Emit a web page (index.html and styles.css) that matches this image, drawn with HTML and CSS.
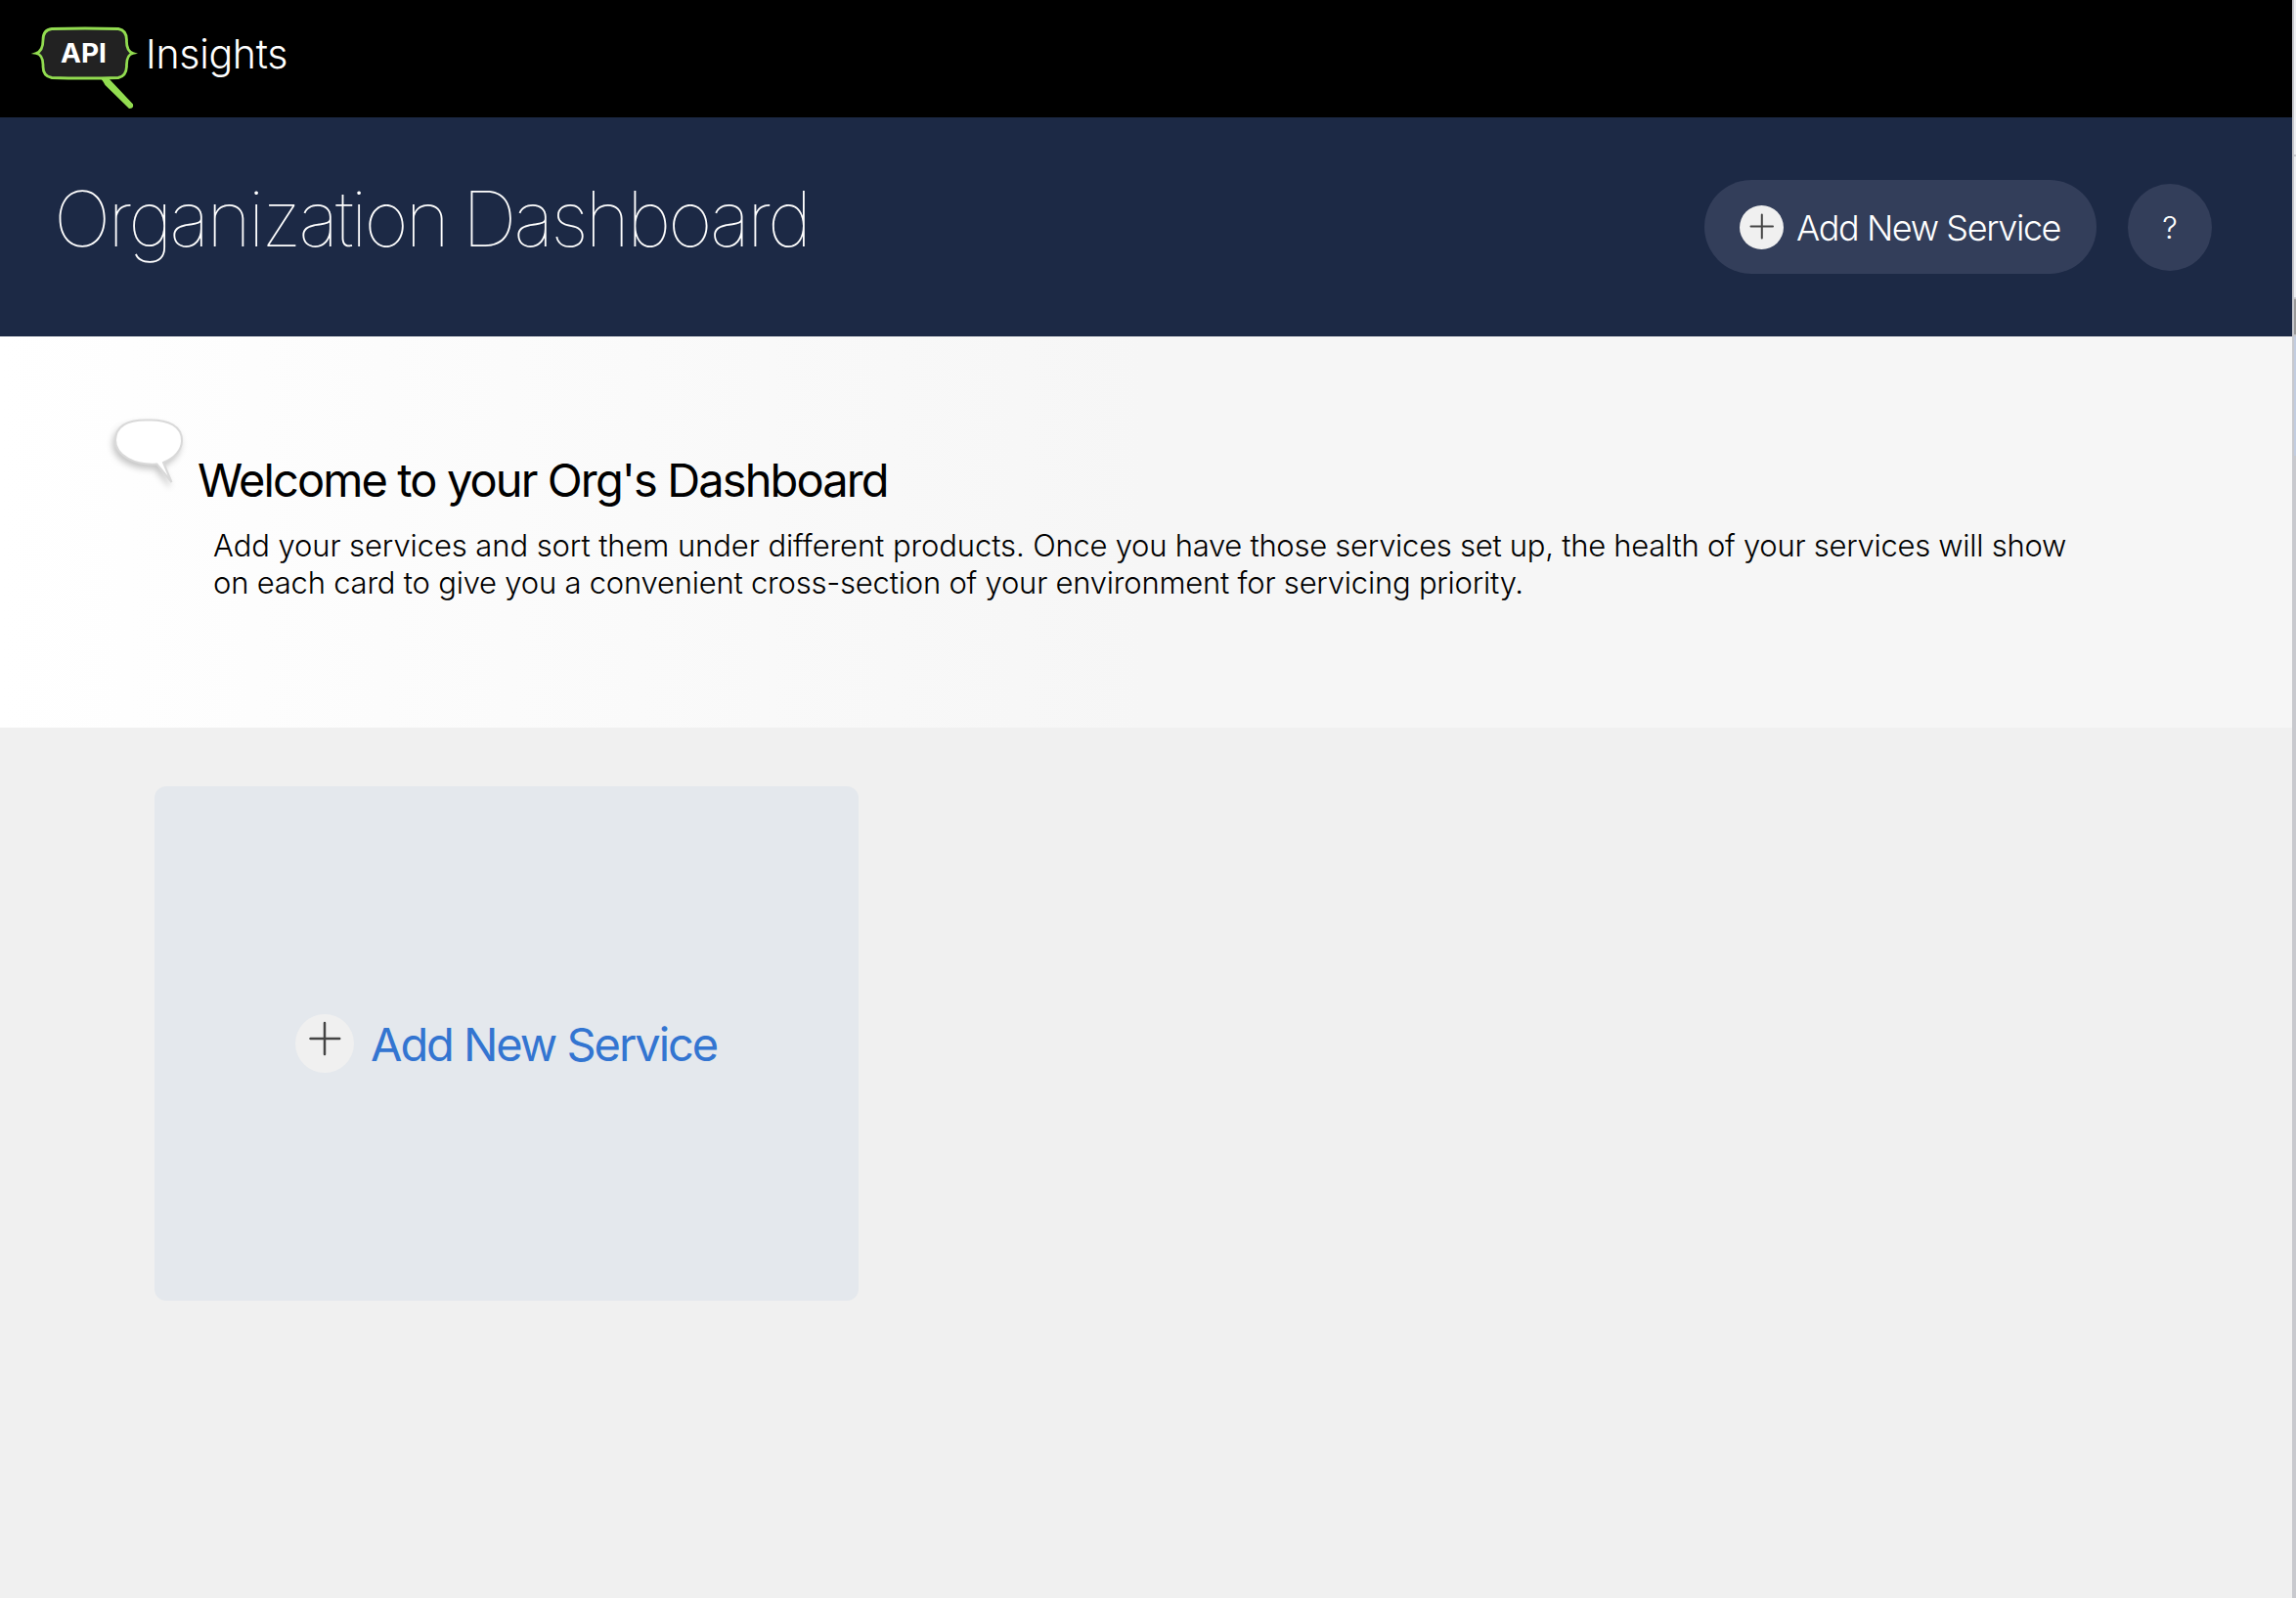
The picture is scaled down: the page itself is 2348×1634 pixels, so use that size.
FILE: index.html
```html
<!DOCTYPE html>
<html lang="en">
<head>
<meta charset="utf-8">
<title>API Insights</title>
<link rel="stylesheet" href="styles.css">
</head>
<body>
<div class="page">
  <header class="topbar">
    <svg class="logo" width="110" height="90" viewBox="0 0 110 90">
      <path d="M72 52 L80 53 L105 79.500 Q106 84 101 84 L76.500 60 Q75 57 72 53Z" fill="#92dc50"/>
      <path d="M22 2.500 Q56 1.500 90 2.500 Q98.500 4 98.500 14 Q98 25 105 27.500 Q98 29 98.500 41 Q98 51 90 52.500 Q56 53.500 22 52.500 Q13 51 13 41 Q13.500 29 6 27.500 Q13 25 13 14 Q13 3.500 22 2.500Z" fill="#222" stroke="#92dc50" stroke-width="2.800"/>
      <text class="logo-text" x="31" y="37" textLength="47" lengthAdjust="spacingAndGlyphs">API</text>
    </svg>
    <span class="brand">Insights</span>
  </header>
  <section class="hero">
    <h1 class="title">Organization Dashboard</h1>
    <div class="actions">
      <div class="pill">
        <svg class="plus" width="45" height="45" viewBox="0 0 45 45"><circle cx="22.500" cy="22.500" r="22.500" fill="#f0f0f0"/><path d="M11.500 21.500H34M22.800 9.500V33.500" stroke="#444" stroke-width="2" stroke-linecap="round"/></svg>
        <span class="pill-label">Add New Service</span>
      </div>
      <div class="help"><span>?</span></div>
    </div>
  </section>
  <section class="welcome">
    <svg class="bubble" width="90" height="90" viewBox="0 0 90 90">
      <path d="M41 9.500 C62 9 76 16 75.500 31 C75 41 68 48 56.500 53 L65 73 L50 54.500 C28 56 7.500 46 7.500 30 C8 15 20 9 41 9.500Z" transform="translate(1.500 -1)" fill="#fff" stroke="#d9d9d9" stroke-width="2"/>
    </svg>
    <div class="intro">
      <h2 class="welcome-title">Welcome to your Org's Dashboard</h2>
      <p class="welcome-text"><span class="line first">Add your services and sort them under different products. <span class="tight">Once you have those services set up, the health of your services will show</span></span> <span class="line second">on each card to give you a convenient cross-section of your environment for servicing priority.</span></p>
    </div>
  </section>
  <main class="cards">
    <div class="card">
      <svg class="plus" width="60" height="60" viewBox="0 0 60 60"><circle cx="30" cy="30" r="30" fill="#f0f0f0"/><path d="M15.500 25H45.200M30 9V41" stroke="#444" stroke-width="2.500" stroke-linecap="round"/></svg>
      <span class="card-label">Add New Service</span>
    </div>
  </main>
</div>
<aside class="edge"><i class="e1"></i><i class="e2"></i><i class="e3"></i><i class="e4"></i></aside>
</body>
</html>
```

FILE: styles.css
```css
* { box-sizing: border-box; }
body {
  margin: 0;
  width: 2348px;
  height: 1634px;
  overflow: hidden;
  display: flex;
  background: #f0f0f0;
  font-family: Inter, "Liberation Sans", sans-serif;
}
.page { width: 2344px; display: flex; flex-direction: column; }
.topbar {
  height: 120px;
  background: #000;
  display: flex;
  align-items: flex-start;
  padding: 27px 0 0 31px;
}
.logo { flex: none; }
.logo-text { font: 700 27px Inter, sans-serif; fill: #fff; }
.brand {
  color: #fff;
  font-size: 41px;
  font-weight: 300;
  line-height: 56px;
  margin-left: 8px;
  letter-spacing: -.3px;
  white-space: nowrap;
}
.hero {
  height: 224px;
  background: #1c2945;
  display: flex;
  justify-content: space-between;
  padding: 0 82px 0 56px;
}
.title {
  margin: 57px 0 0 -1px;
  color: #fff;
  font-size: 78px;
  font-weight: 100;
  line-height: 94px;
  letter-spacing: -3.1px;
  word-spacing: -3px;
  white-space: nowrap;
}
.actions { display: flex; gap: 32px; padding-top: 64px; }
.pill {
  width: 401px;
  height: 96px;
  border-radius: 48px;
  background: #333e5a;
  display: flex;
  align-items: flex-start;
  padding: 26px 0 0 36px;
}
.plus { flex: none; fill: none; }
.pill-label {
  margin-left: 13px;
  color: #fff;
  font-size: 36px;
  font-weight: 300;
  line-height: 46px;
  letter-spacing: -1.4px;
  white-space: nowrap;
}
.help {
  width: 86px;
  height: 89px;
  margin-top: 4px;
  border-radius: 50%;
  background: #333e5a;
  color: #fff;
  display: flex;
  align-items: center;
  justify-content: center;
  font-size: 31px;
  font-weight: 300;
}
.welcome {
  height: 400px;
  display: flex;
  background: linear-gradient(90deg, #fff, #f6f6f6 50%);
  padding: 77px 0 0 109px;
}
.bubble { flex: none; overflow: visible; filter: drop-shadow(-2px 4px 3px rgba(0, 0, 0, .22)); }
.intro { padding: 42px 0 0 4px; }
.welcome-title {
  margin: 0 0 0 -1px;
  font-size: 47px;
  font-weight: 400;
  line-height: 56px;
  letter-spacing: -1.9px;
  white-space: nowrap;
}
.welcome-text {
  margin: 20px 0 0 15px;
  font-size: 31px;
  font-weight: 300;
  line-height: 38px;
}
.line { display: block; white-space: nowrap; }
.first { letter-spacing: -.09px; }
.tight { letter-spacing: -.27px; }
.second { letter-spacing: -.22px; }
.cards { height: 890px; padding: 60px 0 0 158px; }
.card {
  width: 720px;
  height: 526px;
  border-radius: 12px;
  background: #e4e8ed;
  display: flex;
  align-items: flex-start;
  padding: 233px 0 0 144px;
}
.card-label {
  margin-left: 17px;
  color: #3375d1;
  font-size: 47px;
  font-weight: 400;
  line-height: 62px;
  letter-spacing: -2.05px;
  white-space: nowrap;
}
.edge {
  width: 4px;
  display: flex;
  flex-direction: column;
  background: #c8c9ce;
  padding-left: 2px;
}
.e1 { height: 158px; background: #eeeff2; }
.e2 { height: 144px; margin-top: 2px; background: #eeeff2; }
.e3 { height: 36px; margin-top: 2px; background: #999; }
.e4 { height: 122px; margin-top: 2px; background: #c3cde0; }
```
